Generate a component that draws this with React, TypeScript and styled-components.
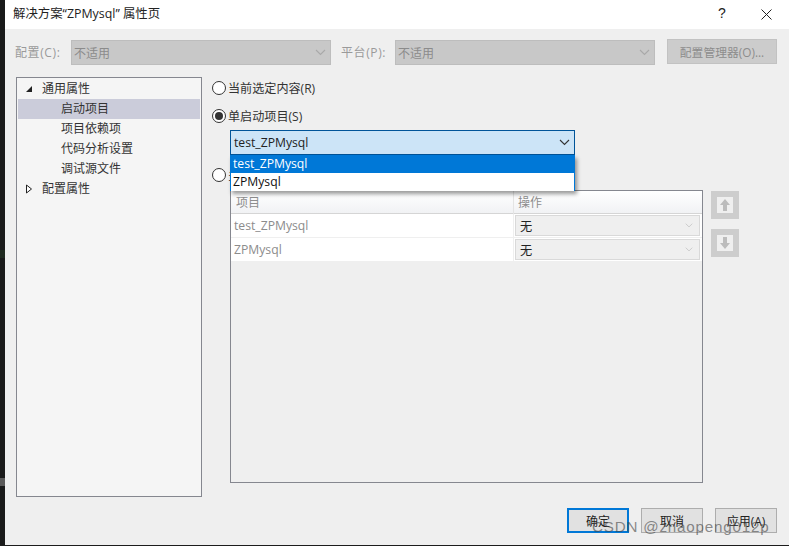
import React from "react";
import styled, { createGlobalStyle } from "styled-components";

const Global = createGlobalStyle`
  html, body { margin: 0; padding: 0; background: #1e1e1e; }
  #root { width: 789px; height: 546px; overflow: hidden; }
  * { box-sizing: border-box; }
`;
const LATIN = `"Open Sans", "Noto Sans CJK SC", sans-serif`;

const Desktop = styled.div`
  display: flex; width: 789px; height: 546px; background: #1c1c1c; position: relative;
  font-family: ${LATIN}; font-size: 12px; color: #1e1e1e;
`;
const Backdrop = styled.div`
  width: 5px; height: 545px; background: #191a1a; flex: none; display: flex; flex-direction: column;
`;
const Speck = styled.div<{ $top: number; $c: string }>`
  width: 5px; height: 8px; margin-top: ${p => p.$top}px; background: ${p => p.$c};
`;
const Dialog = styled.div`
  flex: 1; height: 545px; background: #efefef; display: flex; flex-direction: column;
`;
const TitleBar = styled.div`
  height: 29px; background: #fff; display: flex; align-items: center; padding-left: 8px; flex: none;
`;
const Title = styled.div`
  flex: 1; font-size: 12.4px; color: #222; line-height: 28px; height: 29px; white-space: pre;
`;
const Help = styled.div`
  width: 46px; text-align: center; font-size: 14px; font-weight: 400; color: #222; padding-left: 4px;
  font-family: "Liberation Sans", sans-serif; margin-top: -4px;
`;
const Close = styled.div`
  width: 46px; height: 29px; display: flex; align-items: center; justify-content: center;
`;
const Toolbar = styled.div`
  display: flex; align-items: flex-start; padding: 11px 12px 0 10px; height: 48px; flex: none;
`;
const ToolLabel = styled.div<{ $w: number }>`
  width: ${p => p.$w}px; color: #9a9a9a; font-size: 12px; letter-spacing: .6px; line-height: 25px; white-space: nowrap;
`;
const DisabledSelect = styled.div`
  width: 260px; height: 25px; background: #c8c8c8; border: 1px solid #bdbdbd; display: flex;
  align-items: center; justify-content: space-between; padding: 0 4px 0 2px; color: #8b8b8b; font-size: 12px;
  margin-right: 10px;
`;
const ManagerButton = styled.button`
  width: 110px; height: 25px; margin: -1px 0 0 2px; background: #cccccc; border: 1px solid #c2c2c2; color: #8d8d8d;
  font-family: ${LATIN}; font-size: 11.8px; padding: 0;
`;
const Main = styled.div`
  display: flex; height: 420px; padding-left: 11px; flex: none;
`;
const Tree = styled.div`
  width: 186px; height: 420px; background: #f5f5f5; border: 1px solid #85878f; padding: 1px; flex: none;
`;
const TreeRow = styled.div<{ $sel?: boolean; $child?: boolean }>`
  height: 20px; line-height: 20px; font-size: 12px; color: #333; display: flex; align-items: center;
  padding-left: ${p => (p.$child ? 43 : 7)}px; background: ${p => (p.$sel ? "#cbccda" : "transparent")};
`;
const Arrow = styled.svg`
  width: 8px; height: 10px; margin-right: 9px; flex: none;
`;
const Options = styled.div`
  margin-left: 10px; position: relative; width: 566px; height: 420px; display: flex; flex-direction: column;
`;
const RadioRow = styled.div<{ $mt: number }>`
  display: flex; align-items: center; height: 20px; margin-top: ${p => p.$mt}px; font-size: 12.1px; color: #333; gap: 2px;
`;
const Radio = styled.span<{ $on?: boolean }>`
  width: 14px; height: 14px; border-radius: 50%; border: 1px solid #333; background: #fff; flex: none;
  display: flex; align-items: center; justify-content: center;
  &::after { content: ""; width: 8px; height: 8px; border-radius: 50%; background: ${p => (p.$on ? "#333" : "transparent")}; }
`;
const Combo = styled.div`
  width: 345px; height: 25px; margin: 4px 0 0 18px; background: #cce4f7; border: 1px solid #005499;
  display: flex; align-items: center; justify-content: space-between; padding: 0 4px 0 3px; font-size: 12.2px; color: #222; flex: none;
`;
const Dropdown = styled.div`
  position: absolute; left: 18px; top: 78px; width: 345px; height: 36px; background: #fff; border: 1px solid #0078d7;
  border-top: none; box-shadow: 2px 3px 4px rgba(0,0,0,.4); z-index: 3; font-size: 12.2px;
`;
const DropItem = styled.div<{ $sel?: boolean }>`
  height: 18px; line-height: 18px; padding-left: 2px; color: ${p => (p.$sel ? "#fff" : "#111")};
  background: ${p => (p.$sel ? "#0078d7" : "#fff")};
`;
const TableRow = styled.div`
  display: flex; align-items: flex-start; margin: 5px 0 0 18px;
`;
const Table = styled.div`
  width: 473px; height: 293px; border: 1px solid #85878f; background: #efefef; flex: none;
`;
const Head = styled.div`
  display: grid; grid-template-columns: 283px 1fr; height: 23px;
  background: linear-gradient(#ffffff, #f1f2f4); border-bottom: 1px solid #d5d5d5; color: #8d8d8d; font-size: 12px;
`;
const HeadCell = styled.div`
  line-height: 23px; padding-left: 5px; border-right: 1px solid #e4e4e4;
  &:last-child { border-right: none; padding-left: 4px; }
`;
const Row = styled.div`
  display: grid; grid-template-columns: 283px 1fr; height: 24px; background: #fff; border-bottom: 1px solid #efefef; font-size: 12.2px;
`;
const NameCell = styled.div`
  color: #8c8c8c; line-height: 23px; padding-left: 3px; border-right: 1px solid #efefef;
`;
const OpCell = styled.div`
  padding: 1px 2px 0 1px;
`;
const OpSelect = styled.div`
  height: 21px; background: #efefef; border: 1px solid #d9d9d9; display: flex; align-items: center;
  justify-content: space-between; padding: 0 6px 0 4px; color: #222;
`;
const SideButtons = styled.div`
  display: flex; flex-direction: column; gap: 10px; margin: 1px 0 0 8px;
`;
const SideButton = styled.div`
  width: 28px; height: 28px; background: #cdcdcd; display: flex; align-items: center; justify-content: center;
`;
const SideInner = styled.div`
  width: 16px; height: 16px; background: #efefef; display: flex; align-items: center; justify-content: center;
`;
const Footer = styled.div`
  display: flex; justify-content: flex-end; gap: 12px; padding: 11px 12px 0 0;
`;
const FootButton = styled.button<{ $primary?: boolean }>`
  width: 62px; height: 25px; padding: 0; background: #e1e1e1; font-family: ${LATIN}; font-size: 12px; color: #222;
  border: ${p => (p.$primary ? "2px solid #0078d7" : "1px solid #adadad")};
`;
const Watermark = styled.div`
  position: absolute; left: 592px; top: 518px; font-family: "Liberation Sans", sans-serif; font-size: 15.2px;
  letter-spacing: .8px; color: rgba(70,70,70,.62); white-space: nowrap; z-index: 5;
`;

const Chevron = ({ c, w = 11 }: { c: string; w?: number }) => (
  <svg width={w} height="7" viewBox="0 0 11 7" fill="none"><path d="M1 1l4.5 4.5L10 1" stroke={c} strokeWidth="1.1" /></svg>
);
const VArrow = ({ up }: { up?: boolean }) => (
  <svg width="12" height="14" viewBox="0 0 12 14">
    <path d={up ? "M6 1L11 7H8V13H4V7H1Z" : "M6 13L11 7H8V1H4V7H1Z"} fill="#bcbcbc" />
  </svg>
);

export default function App() {
  return (
    <Desktop>
      <Global />
      <Backdrop>
        <Speck $top={250} $c="#1f2a20" />
        <Speck $top={220} $c="#5a5a5a" />
      </Backdrop>
      <Dialog>
        <TitleBar>
          <Title>解决方案“ZPMysql” 属性页</Title>
          <Help>?</Help>
          <Close>
            <svg width="11" height="11" viewBox="0 0 11 11"><path d="M.5.5l10 10M10.5.5l-10 10" stroke="#222" strokeWidth="1" /></svg>
          </Close>
        </TitleBar>
        <Toolbar>
          <ToolLabel $w={56}>配置(C):</ToolLabel>
          <DisabledSelect>不适用<Chevron c="#a9a9a9" /></DisabledSelect>
          <ToolLabel $w={54}>平台(P):</ToolLabel>
          <DisabledSelect>不适用<Chevron c="#a9a9a9" /></DisabledSelect>
          <ManagerButton>配置管理器(O)...</ManagerButton>
        </Toolbar>
        <Main>
          <Tree>
            <TreeRow>
              <Arrow viewBox="0 0 8 10"><path d="M7 2v6H1z" fill="#222" /></Arrow>
              通用属性
            </TreeRow>
            <TreeRow $child $sel>启动项目</TreeRow>
            <TreeRow $child>项目依赖项</TreeRow>
            <TreeRow $child>代码分析设置</TreeRow>
            <TreeRow $child>调试源文件</TreeRow>
            <TreeRow>
              <Arrow viewBox="0 0 8 10"><path d="M1.5 1l5 4-5 4z" fill="#fff" stroke="#222" /></Arrow>
              配置属性
            </TreeRow>
          </Tree>
          <Options>
            <RadioRow $mt={1}><Radio />当前选定内容(R)</RadioRow>
            <RadioRow $mt={8}><Radio $on />单启动项目(S)</RadioRow>
            <Combo>test_ZPMysql<Chevron c="#333" /></Combo>
            <Dropdown>
              <DropItem $sel>test_ZPMysql</DropItem>
              <DropItem>ZPMysql</DropItem>
            </Dropdown>
            <RadioRow $mt={10}><Radio />多启动项目(M)</RadioRow>
            <TableRow>
              <Table>
                <Head><HeadCell>项目</HeadCell><HeadCell>操作</HeadCell></Head>
                <Row><NameCell>test_ZPMysql</NameCell><OpCell><OpSelect>无<Chevron c="#c4c4c4" w={8} /></OpSelect></OpCell></Row>
                <Row><NameCell>ZPMysql</NameCell><OpCell><OpSelect>无<Chevron c="#c4c4c4" w={8} /></OpSelect></OpCell></Row>
              </Table>
              <SideButtons>
                <SideButton><SideInner><VArrow up /></SideInner></SideButton>
                <SideButton><SideInner><VArrow /></SideInner></SideButton>
              </SideButtons>
            </TableRow>
          </Options>
        </Main>
        <Footer>
          <FootButton $primary>确定</FootButton>
          <FootButton>取消</FootButton>
          <FootButton>应用(A)</FootButton>
        </Footer>
      </Dialog>
      <Watermark>CSDN @zhaopeng012p</Watermark>
    </Desktop>
  );
}
